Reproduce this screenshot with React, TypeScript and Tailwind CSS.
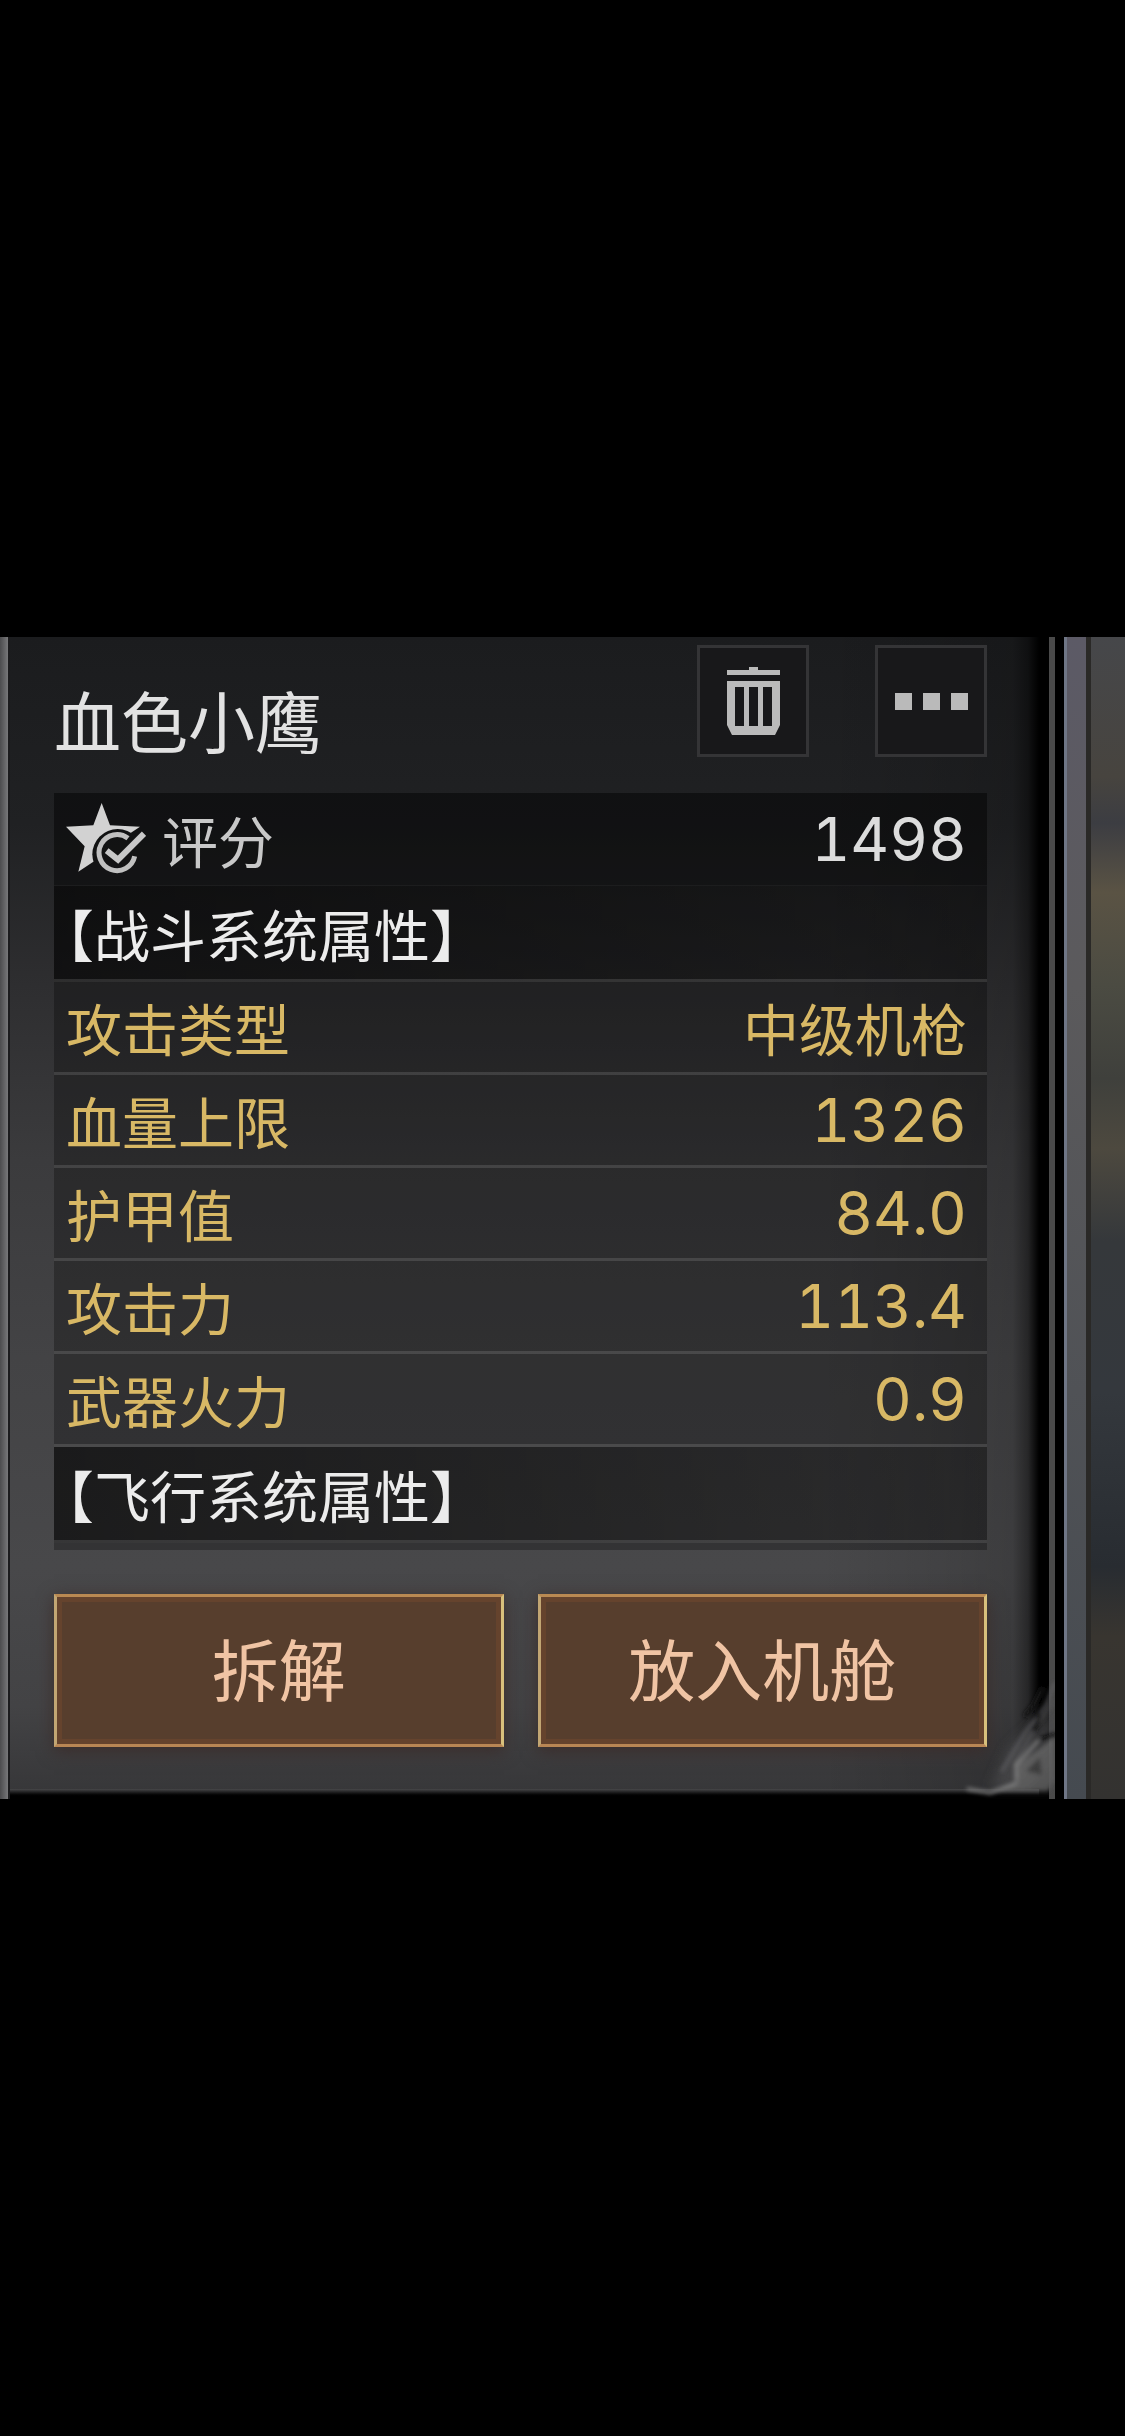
import React from 'react';

interface Stat {
  label: string;
  value: string;
}

const COMBAT_STATS: Stat[] = [
  { label: '攻击类型', value: '中级机枪' },
  { label: '血量上限', value: '1326' },
  { label: '护甲值', value: '84.0' },
  { label: '攻击力', value: '113.4' },
  { label: '武器火力', value: '0.9' },
];

const TrashIcon = () => (
  <svg viewBox="0 0 53 68" className="w-[53px] h-[68px]" fill="#bababa" aria-hidden="true">
    <path d="M22 0h9v3h22v5H0V3h22z" />
    <path
      fillRule="evenodd"
      d="M0 14h53v44l-5 10H5L0 58zM8 20v39h9V20zm14 0v39h9V20zm14 0v39h9V20z"
    />
  </svg>
);

const MoreIcon = () => (
  <svg viewBox="0 0 73 17" className="w-[73px] h-[17px]" fill="#bababa" aria-hidden="true">
    <path d="M0 0h17v17H0zM28 0h17v17H28zM56 0h17v17H56z" />
  </svg>
);

const ScoreIcon = () => (
  <svg viewBox="0 0 240 216" className="w-20 h-[72px] shrink-0" aria-hidden="true">
    <mask id="star-cut">
      <rect width="240" height="216" fill="#fff" />
      <circle cx="155" cy="154" r="76" fill="#000" />
      <path d="M150 140L240 62V120z" fill="#000" />
    </mask>
    <path
      d="M107 0L132 67L222 71L152 118L107 160L37 206L56 130L0 71L82 67z"
      fill="#d2d2d2"
      mask="url(#star-cut)"
    />
    <path d="M186 106A54 54 0 1 0 206 160" fill="none" stroke="#c0c0c0" strokeWidth="15" />
    <path d="M122 143L156 170L234 92" fill="none" stroke="#c8c8c8" strokeWidth="18" />
  </svg>
);

// Worn metal on the lower right corner of the frame
const CornerScratches = () => (
  <svg viewBox="0 0 165 150" className="absolute right-0 bottom-0 w-[165px] h-[150px] pointer-events-none" aria-hidden="true">
    <defs>
      <filter id="soft">
        <feGaussianBlur stdDeviation="2" />
      </filter>
      <filter id="haze" x="-30%" y="-30%" width="160%" height="160%">
        <feGaussianBlur stdDeviation="6" />
      </filter>
      <linearGradient id="worn" x1="0" y1="0" x2="1" y2="1">
        <stop offset="0" stopColor="#727272" />
        <stop offset="1" stopColor="#5a5a5a" />
      </linearGradient>
    </defs>
    <path d="M165 50L150 70L118 100L100 140H165z" fill="#4c4c4e" opacity="0.7" filter="url(#haze)" />
    <g filter="url(#soft)" fill="none" strokeLinecap="round">
      <path d="M165 34L156 56L136 82L112 122" stroke="#66666a" strokeWidth="2" />
      <path d="M164 52L142 84L124 116" stroke="#5a5a5c" strokeWidth="2" />
      <path d="M152 40L144 56L136 66M150 66L144 80" stroke="#161616" strokeWidth="5" />
      <path d="M164 88L128 116L126 132L108 142H158L165 132z" fill="url(#worn)" stroke="none" opacity="0.8" />
      <path d="M148 92L126 116L126 130M78 140L100 144L126 134" stroke="#808080" strokeWidth="3" />
      <path d="M136 122L150 108L152 126z" fill="#3c3c3c" stroke="none" />
      <path d="M152 90L165 86" stroke="#0a0a0a" strokeWidth="4" />
    </g>
  </svg>
);

const SectionRow = ({ title, className }: { title: string; className: string }) => (
  <tr className={className}>
    <th
      colSpan={2}
      scope="colgroup"
      className="h-24 px-3 text-left font-normal text-[#ececec] border-b-3 border-[#ffffff1f] [font-feature-settings:'halt']"
    >
      {title}
    </th>
  </tr>
);

const IconButton = ({ label, children }: { label: string; children: React.ReactNode }) => (
  <button
    type="button"
    aria-label={label}
    className="w-28 h-28 flex items-center justify-center bg-[#18181a] border-3 border-[#343436]"
  >
    {children}
  </button>
);

const ActionButton = ({ children }: { children: React.ReactNode }) => (
  <button
    type="button"
    className="h-[153px] pb-2 text-[67px] leading-none text-[#f0c4a4] bg-[#573e2d] border-3 border-t-[#b98952] border-b-[#b98654] border-l-[#c2a673] border-r-[#d8c07c] shadow-[inset_0_0_0_5px_#65432d,0_4px_16px_#3b2c2a]"
  >
    {children}
  </button>
);

export default function App() {
  return (
    <main className="min-h-screen bg-black flex flex-col justify-center font-['Noto_Sans_CJK_SC',sans-serif]">
      <div className="flex">
        {/* Left metal edge */}
        <div className="w-2 shrink-0 bg-linear-to-r from-[#4c4c4e] to-[#78787a]" />

        <section className="relative grow min-w-0 flex flex-col border-l-2 border-[#1b1b1d] bg-[linear-gradient(to_bottom,#1b1c1e_0%,#202123_16%,#2e2e30_30%,#3b3b3d_45%,#434345_62%,#48484a_80%,#434345_92%,#363638_100%)]">
          <div className="absolute inset-y-0 right-0 w-[220px] bg-[linear-gradient(to_right,transparent,#00000018_60%,#00000028_88%,#00000070_95%,#000)]" />

          <div className="relative pl-11 pr-[52px] pb-[42px]">
            <header className="flex items-start gap-[66px] pt-2">
              <h1 className="grow text-[67px] leading-[148px] text-[#e2e2e2]">血色小鹰</h1>
              <IconButton label="删除">
                <TrashIcon />
              </IconButton>
              <IconButton label="更多">
                <MoreIcon />
              </IconButton>
            </header>

            {/* Attributes */}
            <table className="w-full border-separate border-spacing-0 text-[56px] leading-none bg-[#00000048]">
              <tbody>
                <tr className="bg-[#0000003c] text-[#c8c8c8]">
                  <th scope="row" className="h-[93px] px-3 text-left font-normal border-b border-[#ffffff0a]">
                    <span className="flex items-center gap-4">
                      <ScoreIcon />
                      评分
                    </span>
                  </th>
                  <td className="px-5 text-right font-['Inter',sans-serif] text-[60px] text-[#dcdcdc] tabular-nums border-b border-[#ffffff0a]">
                    1498
                  </td>
                </tr>
                <SectionRow title="【战斗系统属性】" className="bg-linear-to-r from-[#00000078] to-[#00000020]" />
                {COMBAT_STATS.map((stat) => (
                  <tr key={stat.label} className="text-[#d8b865]">
                    <th scope="row" className="h-[93px] px-3 text-left font-normal border-b-3 border-[#ffffff1f]">
                      {stat.label}
                    </th>
                    <td className="px-5 text-right border-b-3 border-[#ffffff1f]">
                      {/^\d/.test(stat.value) ? (
                        <span className="block font-['Inter',sans-serif] text-[60px] tabular-nums">{stat.value}</span>
                      ) : (
                        stat.value
                      )}
                    </td>
                  </tr>
                ))}
                <SectionRow title="【飞行系统属性】" className="bg-linear-to-r from-[#00000078] to-[#00000020]" />
                <tr>
                  <td colSpan={2} className="h-[7px]" />
                </tr>
              </tbody>
            </table>

            <div className="grid grid-cols-2 gap-[34px] pt-11">
              <ActionButton>拆解</ActionButton>
              <ActionButton>放入机舱</ActionButton>
            </div>
          </div>

          <div className="relative h-[10px] bg-linear-to-b from-[#48484a] to-black to-80%" />
        </section>

        {/* Right frame: double bezel, metal rail and the blurred scene behind */}
        <div className="w-[10px] shrink-0 bg-black" />
        <div className="relative w-[6px] shrink-0 bg-[#4a4a4a]">
          <CornerScratches />
        </div>
        <div className="relative w-[9px] shrink-0 bg-black" />
        <div className="relative w-[22px] shrink-0 border-l-3 border-[#6f7686] bg-linear-to-b from-[#5c5a66] from-0% via-[#5b5a5c] via-30% to-[#454a50] to-100%" />
        <div className="w-[39px] shrink-0 border-l-5 border-[#2a2927] bg-[linear-gradient(to_bottom,#46474a_0%,#47443f_12%,#3c3d42_16%,#5a5344_22%,#4b4b42_30%,#3f403c_38%,#4d493f_44%,#35383b_52%,#34383d_65%,#282c31_80%,#383530_86%,#333230_100%)]" />
      </div>
    </main>
  );
}
